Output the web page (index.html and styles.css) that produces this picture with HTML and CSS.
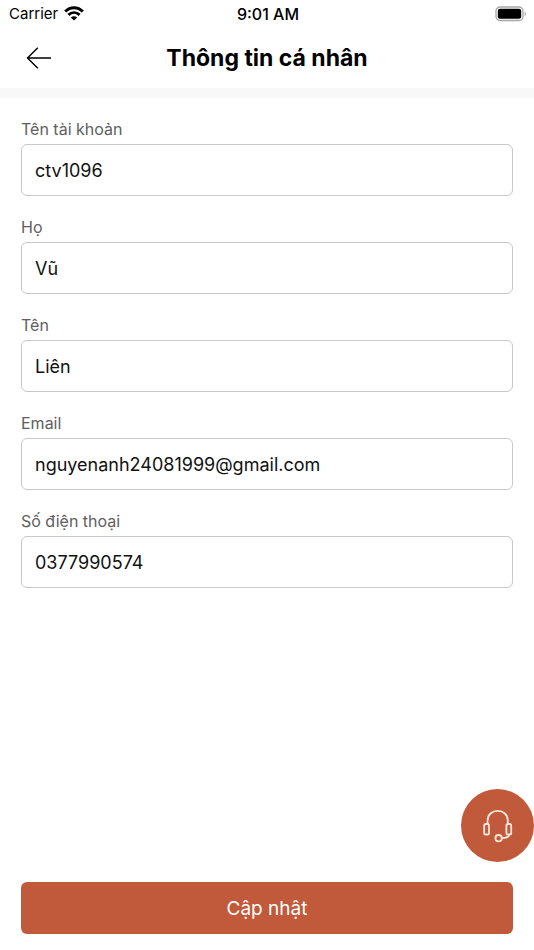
FILE: index.html
```html
<!DOCTYPE html>
<html lang="vi">
<head>
    <meta charset="UTF-8">
    <meta name="viewport" content="width=device-width, initial-scale=1.0">
    <title>Thông tin cá nhân</title>
    <link rel="stylesheet" href="styles.css">
</head>
<body>
    <div class="status-bar">
        <div class="carrier">
            <span>Carrier</span>
            <svg width="20" height="15" viewBox="0 0 20 15" fill="none" stroke="#000" stroke-width="2.9">
                <path d="M1.2 5.6C6.2 .5 13.8 .5 18.8 5.6"/>
                <path d="M4.4 8.9C7.7 5.8 12.3 5.8 15.6 8.9"/>
                <path d="M10 14.6L6.8 11.4C8.6 9.7 11.4 9.7 13.2 11.4Z" fill="#000" stroke="none"/>
            </svg>
        </div>
        <div class="time">9:01 AM</div>
        <div class="battery">
            <svg width="32" height="16" viewBox="0 0 32 16" fill="none">
                <rect x="1" y="1" width="27" height="13.5" rx="4" stroke="#a6a6a6" stroke-width="1.3"/>
                <rect x="2.8" y="2.8" width="23.4" height="9.9" rx="2.2" fill="#000"/>
                <path d="M29.7 5.4C31.4 6.2 31.4 9.3 29.7 10.1Z" fill="#a6a6a6"/>
            </svg>
        </div>
    </div>
    <header class="header">
        <button class="back-btn" type="button" aria-label="Quay lại">
            <svg width="26" height="22" viewBox="0 0 26 22" fill="none" stroke="#000" stroke-width="1.4">
                <path d="M25 11H1.5M11.8 .8L1.5 11L11.8 21.2"/>
            </svg>
        </button>
        <h1>Thông tin cá nhân</h1>
    </header>
    <form class="profile-form">
        <div class="field">
            <label for="username">Tên tài khoản</label>
            <input type="text" id="username" value="ctv1096">
        </div>
        <div class="field">
            <label for="last-name">Họ</label>
            <input type="text" id="last-name" value="Vũ">
        </div>
        <div class="field">
            <label for="first-name">Tên</label>
            <input type="text" id="first-name" value="Liên">
        </div>
        <div class="field">
            <label for="email">Email</label>
            <input type="email" id="email" value="nguyenanh24081999@gmail.com">
        </div>
        <div class="field">
            <label for="phone">Số điện thoại</label>
            <input type="tel" id="phone" value="0377990574">
        </div>
        <button class="submit-btn" type="submit">Cập nhật</button>
    </form>
    <button class="support-btn" type="button" aria-label="Hỗ trợ">
        <svg width="30" height="34" viewBox="0 0 30 34" fill="none" stroke="#fbe6dd" stroke-width="1.8">
            <rect x="1.2" y="15" width="4.8" height="10.5" rx="1.6"/>
            <rect x="23.4" y="15" width="4.8" height="10.5" rx="1.6"/>
            <path d="M4.6 15V11.5C4.6 5.8 9 1.8 14.7 1.8S24.8 5.8 24.8 11.5V15"/>
            <circle cx="15.6" cy="29.2" r="3.2"/>
            <path d="M18.8 29.2C23 29 26 28 26.4 25.5"/>
        </svg>
    </button>
</body>
</html>
```

FILE: styles.css
```css
*{
    margin: 0px;
    padding: 0px;
    box-sizing: border-box;
}
body{
    background: #fff;
    color: #000;
    font-family: Inter, "Noto Sans", sans-serif;
    min-height: 100vh;
    display: flex;
    flex-direction: column;
}
button, input{
    font-family: inherit;
}
svg{
    display: block;
}
.status-bar{
    height: 27px;
    padding: 0px 7px 0px 9px;
    display: grid;
    grid-template-columns: 1fr auto 1fr;
    align-items: center;
    font-size: 15px;
}
.carrier{
    display: flex;
    align-items: center;
    gap: 6px;
}
.time{
    font-size: 16px;
    font-weight: 500;
}
.battery{
    justify-self: end;
}
.header{
    height: 71px;
    padding: 0px 26px;
    border-bottom: 10px solid #f8f8f8;
    display: grid;
    grid-template-columns: 1fr auto 1fr;
    align-items: center;
}
.header h1{
    font-size: 23px;
    line-height: 28px;
    font-weight: 700;
}
.back-btn{
    justify-self: start;
    border: none;
    background: none;
}
.profile-form{
    flex: 1;
    padding: 21px 21px 16px;
    display: flex;
    flex-direction: column;
    gap: 21px;
}
.field{
    display: flex;
    flex-direction: column;
    gap: 4px;
}
.field label{
    color: #606060;
    font-size: 16px;
    line-height: 21px;
}
.field input{
    width: 100%;
    height: 52px;
    padding: 0px 13px;
    border: 1px solid #c8c8c8;
    border-radius: 6px;
    background: #fff;
    color: #111;
    font-size: 18px;
}
.submit-btn{
    height: 52px;
    margin-top: auto;
    border: none;
    border-radius: 6px;
    background: #c15a3a;
    color: #fff;
    font-size: 19px;
}
/* floats above the form */
.support-btn{
    position: fixed;
    right: 0px;
    bottom: 88px;
    width: 73px;
    height: 73px;
    border: none;
    border-radius: 50%;
    background: #c15a3a;
    display: flex;
    justify-content: center;
    align-items: center;
}
```
